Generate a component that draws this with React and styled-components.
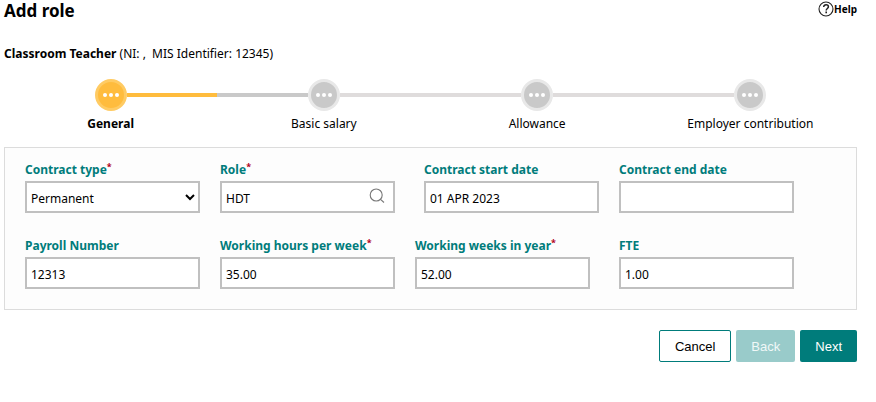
import React, { useState } from 'react';
import styled, { createGlobalStyle } from 'styled-components';

const GlobalStyle = createGlobalStyle`
    * {
        box-sizing: border-box;
    }

    body {
        margin: 0;
        background-color: #fff;
        color: #000;
        font-family: 'Noto Sans', 'Open Sans', sans-serif;
        font-size: 12px;
        line-height: 18px;
    }
`;

// Styled Components
const Page = styled.main`
    padding: 0 19px 40px 4px;
`;

const Header = styled.header`
    display: flex;
    justify-content: space-between;
    align-items: flex-start;
    margin-bottom: 23px;
`;

const Title = styled.h1`
    margin: 0;
    font-size: 17px;
    line-height: 22px;
    font-weight: 700;
`;

const HelpLink = styled.a`
    display: flex;
    align-items: center;
    color: #000;
    font-size: 10px;
    font-weight: 700;
    text-decoration: none;

    svg {
        display: block;
    }
`;

const RoleName = styled.p`
    margin: 0 0 16px;
    white-space: pre-wrap;
`;

const Steps = styled.ol`
    display: grid;
    grid-template-columns: repeat(4, 1fr);
    list-style: none;
    margin: 0 0 14px;
    padding: 0;
`;

const Step = styled.li`
    display: flex;
    flex-direction: column;
    align-items: center;
    gap: 4px;
    font-weight: ${({ $active }) => ($active ? 700 : 400)};
`;

const Track = styled.div`
    display: flex;
    align-items: center;
    width: 100%;
`;

const Line = styled.span`
    flex: 1;
    height: 4px;
    background-color: ${({ $color }) => $color};
`;

const Dot = styled.span`
    display: flex;
    justify-content: center;
    align-items: center;
    gap: 2px;
    width: 32px;
    height: 32px;
    border: 3px solid ${({ $active }) => ($active ? '#ffcb63' : '#e8e8e8')};
    border-radius: 50%;
    background-color: ${({ $active }) => ($active ? '#ffbc3d' : '#c9c9c9')};

    i {
        width: 4px;
        height: 4px;
        border-radius: 50%;
        background-color: #fff;
    }
`;

const Panel = styled.section`
    display: flex;
    flex-direction: column;
    gap: 24px;
    padding: 13px 20px 20px;
    border: 1px solid #dcdcdc;
    background-color: #fdfdfd;
`;

const Row = styled.div`
    display: flex;
    gap: 20px;
`;

const Field = styled.div`
    flex: 0 1 175px;
    min-width: 0;
    margin-right: ${({ $spaced }) => ($spaced ? '9px' : '0')};
`;

const Label = styled.label`
    display: flex;
    height: 18px;
    margin-bottom: 2px;
    color: #007c7b;
    font-weight: 700;
    white-space: nowrap;
`;

const Required = styled.span`
    color: #b00020;
    font-size: 9px;
    line-height: 12px;
`;

const Control = styled.div`
    display: flex;
    align-items: center;
    height: 32px;
    border: 2px solid #c0c0c0;
    background-color: #fff;

    svg {
        flex: none;
        margin: 0 8px 2px 0;
    }
`;

const Input = styled.input`
    flex: 1;
    min-width: 0;
    height: 100%;
    padding: 2px 4px 0;
    border: 0;
    outline: 0;
    background: transparent;
    color: #000;
    font: inherit;
`;

const Select = styled.select`
    flex: 1;
    min-width: 0;
    height: 100%;
    padding: 2px 0 0;
    border: 0;
    outline: 0;
    background: transparent;
    color: #000;
    font: inherit;
`;

const Actions = styled.div`
    display: flex;
    justify-content: flex-end;
    gap: 5px;
    margin-top: 20px;
`;

const Button = styled.button`
    height: 32px;
    padding: 0 15px;
    border: ${({ $primary }) => ($primary ? '0' : '1px solid #007c7b')};
    border-radius: 2px;
    background-color: ${({ $primary }) => ($primary ? '#007c7b' : '#fff')};
    color: ${({ $primary }) => ($primary ? '#fff' : '#000')};
    font-family: 'Liberation Sans', Arial, sans-serif;
    font-size: 13px;
    cursor: pointer;

    &:disabled {
        background-color: #99cbca;
        color: #f0f8f8;
        cursor: default;
    }
`;

const HelpIcon = () => (
    <svg width="16" height="16" viewBox="0 0 16 16" fill="none" stroke="#222" aria-hidden="true">
        <circle cx="8" cy="8" r="7" strokeWidth="1.1" />
        <path d="M5.7 6.1c0-1.5 1-2.3 2.4-2.3s2.3.8 2.3 2c0 1.7-2.2 1.7-2.2 3.6" strokeWidth="1.5" />
        <path d="M8.2 10.6v1.6" strokeWidth="1.6" />
    </svg>
);

const SearchIcon = () => (
    <svg width="16" height="16" viewBox="0 0 16 16" fill="none" stroke="#777" strokeWidth="1.1" aria-hidden="true">
        <circle cx="7.2" cy="7" r="6" />
        <path d="M11.5 11.3l3.5 3.2" />
    </svg>
);

const steps = [
    { name: 'General', before: 'transparent', after: '#ffbc3d' },
    { name: 'Basic salary', before: '#c9c9c9', after: '#dfdcdc' },
    { name: 'Allowance', before: '#dfdcdc', after: '#dfdcdc' },
    { name: 'Employer contribution', before: '#dfdcdc', after: 'transparent' },
];

const rows = [
    [
        { id: 'contractType', label: 'Contract type', required: true, options: ['Permanent', 'Temporary'] },
        { id: 'role', label: 'Role', required: true, lookup: true, spaced: true },
        { id: 'startDate', label: 'Contract start date' },
        { id: 'endDate', label: 'Contract end date' },
    ],
    [
        { id: 'payrollNumber', label: 'Payroll Number' },
        { id: 'hours', label: 'Working hours per week', required: true },
        { id: 'weeks', label: 'Working weeks in year', required: true, spaced: true },
        { id: 'fte', label: 'FTE' },
    ],
];

const App = () => {
    const [values, setValues] = useState({
        contractType: 'Permanent',
        role: 'HDT',
        startDate: '01 APR 2023',
        endDate: '',
        payrollNumber: '12313',
        hours: '35.00',
        weeks: '52.00',
        fte: '1.00',
    });

    const handleChange = (e) => {
        setValues({ ...values, [e.target.id]: e.target.value });
    };

    return (
        <Page>
            <GlobalStyle />
            <Header>
                <Title>Add role</Title>
                <HelpLink href="#help">
                    <HelpIcon />
                    Help
                </HelpLink>
            </Header>

            <RoleName>
                <strong>Classroom Teacher</strong>
                {' (NI: ,  MIS Identifier: 12345)'}
            </RoleName>

            <Steps>
                {steps.map((step, index) => (
                    <Step key={step.name} $active={index === 0}>
                        <Track>
                            <Line $color={step.before} />
                            <Dot $active={index === 0}>
                                <i />
                                <i />
                                <i />
                            </Dot>
                            <Line $color={step.after} />
                        </Track>
                        {step.name}
                    </Step>
                ))}
            </Steps>

            <Panel>
                {rows.map((fields, index) => (
                    <Row key={index}>
                        {fields.map((field) => (
                            <Field key={field.id} $spaced={field.spaced}>
                                <Label htmlFor={field.id}>
                                    {field.label}
                                    {field.required && <Required>*</Required>}
                                </Label>
                                <Control>
                                    {field.options ? (
                                        <Select id={field.id} value={values[field.id]} onChange={handleChange}>
                                            {field.options.map((option) => (
                                                <option key={option}>{option}</option>
                                            ))}
                                        </Select>
                                    ) : (
                                        <Input id={field.id} value={values[field.id]} onChange={handleChange} />
                                    )}
                                    {field.lookup && <SearchIcon />}
                                </Control>
                            </Field>
                        ))}
                    </Row>
                ))}
            </Panel>

            <Actions>
                <Button type="button">Cancel</Button>
                <Button type="button" $primary disabled>Back</Button>
                <Button type="button" $primary>Next</Button>
            </Actions>
        </Page>
    );
};

export default App;
